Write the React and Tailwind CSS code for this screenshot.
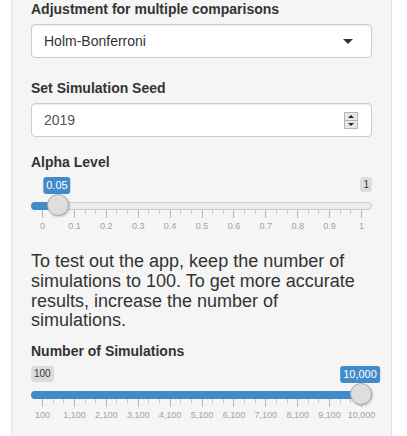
import React from "react";

const SPAN = 319;
const pos = (p) => 11 + p * SPAN;

const ALPHA_GRID = ["0", "0.1", "0.2", "0.3", "0.4", "0.5", "0.6", "0.7", "0.8", "0.9", "1"];
const SIM_GRID = ["100", "1,100", "2,100", "3,100", "4,100", "5,100", "6,100", "7,100", "8,100", "9,100", "10,000"];

const Slider = ({ value, single, min, max, grid }) => {
  const hx = pos(value);
  const step = SPAN / 10;
  const ticks = [];
  grid.forEach((g, i) => {
    const x = pos(i / 10);
    if (i > 0) {
      ticks.push({ x: x - step / 3, small: true });
      ticks.push({ x: x - (2 * step) / 3, small: true });
    }
    ticks.push({ x, small: false });
  });

  return (
    <div className="relative h-[60px] w-full">
      {min && (
        <span className="absolute left-0 top-0 rounded-[3px] bg-black/10 px-[3px] py-px text-[10px] leading-[1.333] text-[#333]">
          {min}
        </span>
      )}
      {max && (
        <span className="absolute right-0 top-0 rounded-[3px] bg-black/10 px-[3px] py-px text-[10px] leading-[1.333] text-[#333]">
          {max}
        </span>
      )}
      <span
        className="absolute top-0 -translate-x-1/2 whitespace-nowrap rounded-[3px] bg-[#428bca] px-[3px] py-px text-[11px] leading-[1.333] text-white"
        style={{ left: hx - 1 }}
      >
        {single}
      </span>

      <div className="absolute left-0 right-0 top-[25px] h-2 rounded-full border border-[#ccc] bg-[#ededed]" />
      <div className="absolute left-0 top-[25px] h-2 rounded-l-full bg-[#428bca]" style={{ width: hx }} />

      {ticks.map((t, i) => (
        <div
          key={i}
          className={
            t.small
              ? "absolute top-[33px] h-1 w-px bg-[#999] opacity-50"
              : "absolute top-[33px] h-2 w-px bg-[#428bca] opacity-50"
          }
          style={{ left: Math.round(t.x) }}
        />
      ))}
      {grid.map((g, i) => (
        <span
          key={g}
          className="absolute top-[45px] -translate-x-1/2 whitespace-nowrap text-[9px] leading-[9px] text-[#99a4ac]"
          style={{ left: pos(i / 10) + 0.5 }}
        >
          {g}
        </span>
      ))}

      <div
        className="absolute top-[17px] h-[22px] w-[22px] rounded-full border border-[#aaa] bg-[#dedede] shadow-[1px_1px_2px_rgba(0,0,0,0.2)]"
        style={{ left: hx - 11 }}
      />
    </div>
  );
};

const App = () => {
  return (
    <div className="min-h-screen overflow-hidden bg-white font-['Liberation_Sans',Arial,sans-serif] text-sm text-[#333]">
      <div className="ml-[11px] mt-[-21px] w-[381px] border border-[#e3e3e3] bg-[#f5f5f5] p-[19px] shadow-[inset_0_1px_1px_rgba(0,0,0,0.05)]">
        <div className="mb-5">
          <label className="mb-[5px] block text-sm font-bold leading-5">Adjustment for multiple comparisons</label>
          <div className="flex h-[34px] w-full items-center justify-between rounded-[4px] border border-[#ccc] bg-white pl-3 pr-[18px] shadow-[inset_0_1px_1px_rgba(0,0,0,0.075)]">
            <span className="leading-5">Holm-Bonferroni</span>
            <span className="h-0 w-0 border-l-[5px] border-r-[5px] border-t-[5px] border-l-transparent border-r-transparent border-t-[#333]" />
          </div>
        </div>

        <div className="mb-[15px]">
          <label className="mb-[5px] block text-sm font-bold leading-5">Set Simulation Seed</label>
          <div className="flex h-[34px] w-full items-center justify-between rounded-[4px] border border-[#ccc] bg-white pl-3 pr-[13px] shadow-[inset_0_1px_1px_rgba(0,0,0,0.075)]">
            <span className="leading-5 text-[#555]">2019</span>
            <div className="flex h-[17px] w-[14px] flex-col border border-[#b5b5b5] bg-[#e8e8e8]">
              <div className="flex flex-1 items-center justify-center border-b border-[#b5b5b5]">
                <span className="h-0 w-0 border-b-[3px] border-l-[3px] border-r-[3px] border-b-[#222] border-l-transparent border-r-transparent" />
              </div>
              <div className="flex flex-1 items-center justify-center">
                <span className="h-0 w-0 border-l-[3px] border-r-[3px] border-t-[3px] border-l-transparent border-r-transparent border-t-[#222]" />
              </div>
            </div>
          </div>
        </div>

        <div className="mb-[15px]">
          <label className="mb-[5px] block text-sm font-bold leading-5">Alpha Level</label>
          <Slider value={0.05} single="0.05" max="1" grid={ALPHA_GRID} />
        </div>

        <h4 className="mb-[10px] text-[18px] font-medium leading-[1.1]">
          To test out the app, keep the number of simulations to 100. To get more accurate results, increase the number of simulations.
        </h4>

        <div className="mb-[15px]">
          <label className="mb-[5px] block text-sm font-bold leading-5">Number of Simulations</label>
          <Slider value={1} single="10,000" min="100" grid={SIM_GRID} />
        </div>
      </div>
    </div>
  );
};

export default App;
